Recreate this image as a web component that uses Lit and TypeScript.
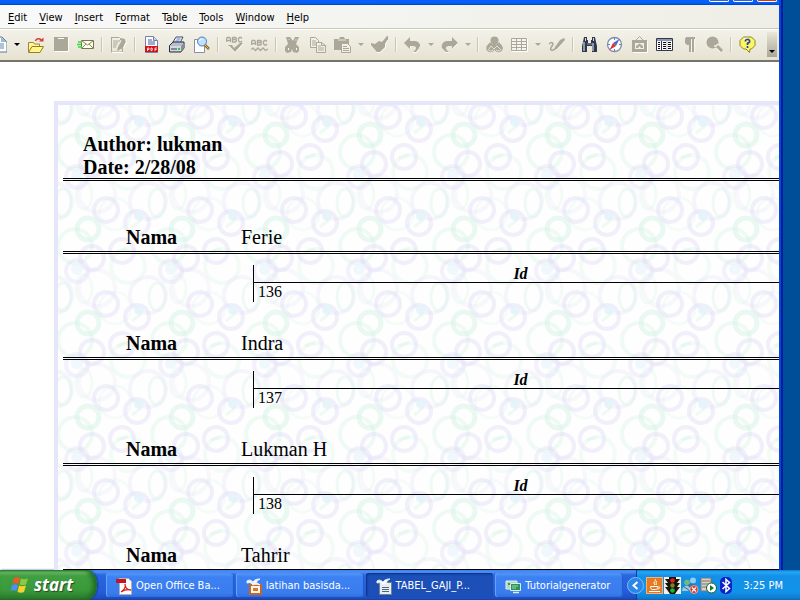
import { LitElement, html, css, svg, nothing, SVGTemplateResult } from "lit";
import { customElement } from "lit/decorators.js";
import { classMap } from "lit/directives/class-map.js";

const G = "#aca899";

const icons: Record<string, SVGTemplateResult> = {
  newDoc: svg`<path d="M3 1h9l5 5v10H3z" fill="#fff" stroke="#5c7894"/><path d="M11 1l6 5h-6z" fill="#9fb8cc"/><path d="M6 8h8M6 10h8M6 12h8" stroke="#5c87a8"/>`,
  open: svg`<path d="M1.5 16V6.500h5l1 1.500h5V11" fill="#fff2a0" stroke="#a08a28"/><path d="M1.500 16.500L5 10.500h11.500L13 16.500z" fill="#fff68c" stroke="#94801e"/><path d="M8.500 5C9 2.500 12 2 14.500 4" fill="none" stroke="#d83a34" stroke-width="1.500"/><path d="M12 5.500h4.500V1.500z" fill="#d83a34"/>`,
  save: svg`<path d="M2 1h14v14H2z" fill="${G}"/><path d="M6 2.500h6" stroke="#fff"/><path d="M16.500 2v13.500H3" fill="none" stroke="#fff"/>`,
  mail: svg`<path d="M4.500 4.500h12v8h-12z" fill="#fffff0" stroke="#77784e"/><path d="M5 5l5.500 4L16 5M5 12l4-4M16 12l-4-4" fill="none" stroke="#8a8a5c"/><path d="M1 6h4M0 8.500h4M1 11h4" stroke="#38d848" stroke-width="1.500"/>`,
  edit: svg`<path d="M1.500 1.500h8M1.500 1v15h11v-4" fill="none" stroke="${G}"/><path d="M3 5h7M3 7h5M3 9h4M3 11h3" stroke="${G}"/><path d="M12 4l4 1-3 7-6 3 1-4z" fill="${G}"/><path d="M10 2l5 1v3l-5-2z" fill="${G}"/><path d="M2 16.500h11M16.500 6l-3 6" fill="none" stroke="#fff"/>`,
  pdf: svg`<path d="M2.500 .5h8l4 4v12h-12z" fill="#fff" stroke="#7780a8"/><path d="M10.500 .5v4h4" fill="#c8d0f0" stroke="#7780a8"/><path d="M5 4h4M5 6h7M5 8h7" stroke="#4858a0"/><path d="M2 10h13v6H2z" fill="#cf1616"/><path d="M4.500 15v-3h1.500v1.500H4.500M8 12v2.500h1l.5-1-.5-1.500zM12 15v-3h2M12 13.500h1.500" fill="none" stroke="#fff" stroke-width=".8"/>`,
  print: svg`<path d="M5 6l3-5h7l-3 6z" fill="#fff" stroke="#424a62"/><path d="M8.500 3h4M7.500 5h4" stroke="#4a72c8"/><path d="M1.500 9.500L5 6h11v6l-3 4H1.500z" fill="#b8bdc9" stroke="#282c3a"/><path d="M2 10h11v5H2z" fill="#d6d9e0"/><path d="M13 10l3-3v5l-3 4z" fill="#858ca4"/><path d="M3 13h6" stroke="#30384a"/><path d="M10 12h2v2h-2z" fill="#28c83c"/>`,
  preview: svg`<path d="M1.500 3.500h10v13h-10z" fill="#fff" stroke="#8791a2"/><circle cx="9" cy="5.500" r="4.500" fill="#bfe1ff" stroke="#4a78c0"/><path d="M6.500 5a3 3 0 0 1 3-2" fill="none" stroke="#fff"/><path d="M12 9l4 4" stroke="#946420" stroke-width="2.500"/><path d="M12 9l3.500 3.500" stroke="#e8b858"/>`,
  spell: svg`<path d="M.5 6V2.500l1-1h2l1 1V6M.5 4.500h4M6.500 1V6h3l1-1-1-1.500h-3 3l1-1-1-1h-3M16 2.500l-1-1h-1.500l-1 1v2l1 1.500h1.500l1-1" fill="none" stroke="${G}" stroke-width="1.300"/><path d="M2 9l4 0 2 3 6-5h3l-8 9z" fill="${G}"/><path d="M3 10l6 6.500 8-8.500" fill="none" stroke="#fff" stroke-width=".7"/>`,
  autoSpell: svg`<path d="M.5 9V5.500l1-1h2l1 1V9M.5 7.500h4M6.500 4V9h3l1-1-1-1.500h-3 3l1-1-1-1h-3M16 5.500l-1-1h-1.500l-1 1v2l1 1.500h1.500l1-1" fill="none" stroke="${G}" stroke-width="1.300"/><path d="M0 13.500l2-1.500 2.500 2.500L7 12l2.500 2.500L12 12l2.500 2.500L17 13" fill="none" stroke="${G}" stroke-width="1.300"/>`,
  cut: svg`<path d="M2 1h4l3 4 2-4h4l-3 7 3 3v4l-2 2-4-1-1-3-1 3-4 1-2-2v-4l3-3z" fill="${G}"/><path d="M4 12h1v2H4zM12 12h1v2h-1z" fill="#fff"/><path d="M5 3v1M12 3v2" stroke="#dedbcf"/>`,
  copy: svg`<path d="M1.500 1.500h5l3 3v7h-8z" fill="#f2f0e6" stroke="${G}"/><path d="M3 5h4M3 7h4M3 9h4" stroke="${G}"/><path d="M7.500 6.500h5l4 3v7h-9z" fill="#f2f0e6" stroke="${G}"/><path d="M12.500 6.500v3h4M9 10h3M9 12h6M9 14h6" fill="none" stroke="${G}"/>`,
  paste: svg`<path d="M0 3h5l1-2h4l1 2h4v11H0z" fill="${G}"/><path d="M4 4h8" stroke="#e9e6da"/><path d="M7.500 7.500h6l3 3v6h-9z" fill="#f2f0e6" stroke="${G}"/><path d="M9 10.500h4M9 12.500h6M9 14.500h6" stroke="${G}"/>`,
  brush: svg`<path d="M16 0h1v4l-3 4 0 3-5 5H6L0 9V7l4 1 4-3 3 1z" fill="${G}"/><path d="M16.500 4L14.500 8.500v3L9 16.500H6" fill="none" stroke="#fff" stroke-width=".8"/>`,
  undo: svg`<path d="M0 7l6-6v4h5c4 0 6 4 5 7l-4 4h-3c4-3 4-5 1-6H6v3z" fill="${G}"/><path d="M6.500 12.500v-2M16.500 10l-4 6.500H9" fill="none" stroke="#fff" stroke-width=".8"/>`,
  redo: svg`<path d="M17 7l-6-6v4H6c-4 0-6 4-5 7l4 4h3c-4-3-4-5-1-6h4v3z" fill="${G}"/><path d="M11.500 12.500l5-5M4 16.500h4" fill="none" stroke="#fff" stroke-width=".8"/>`,
  link: svg`<circle cx="8.500" cy="4.500" r="4" fill="${G}"/><path d="M5 7l-2 3M12 7l2 3M8.500 5v8" stroke="${G}" stroke-width="3"/><circle cx="4.500" cy="12" r="4.300" fill="${G}"/><circle cx="12.500" cy="12" r="4.300" fill="${G}"/><path d="M3 13l2-3 3 3 3-3 3 3M2 13a3 3 0 0 0 5 1M10 14a3 3 0 0 0 5-1" fill="none" stroke="#f0eee4" stroke-width=".8"/>`,
  table: svg`<path d="M.5 2.500h15v12H.5zM.5 5.500h15M.5 8.500h15M.5 11.500h15M5.500 2.500v12M10.500 2.500v12" fill="#f6f4ec" stroke="${G}"/><path d="M16.500 3v12.500H1" fill="none" stroke="#fff"/>`,
  draw: svg`<path d="M16 2c2 1 0 4-2 6l-5 5-3 1 1-3 5-7z" fill="${G}"/><path d="M1 8c3-3 5-1 3 2s-2 5 1 4l2-1" fill="none" stroke="${G}" stroke-width="1.500"/><path d="M16.500 5l-8 9" stroke="#fff" stroke-width=".7"/>`,
  find: svg`<path d="M3 1h3v3h1v3h3V4h1V1h3l1 5 1 4v6h-5v-6H6v6H1v-6l1-4z" fill="#30384c"/><path d="M3 6v9M12 7v8" stroke="#aab4cc" stroke-width="1.500"/><path d="M4.500 2v3M12.500 2v3" stroke="#ccd6e8"/><path d="M6 8h5" stroke="#8c98b8"/>`,
  compass: svg`<circle cx="8.500" cy="8.500" r="7" fill="#fff" stroke="#7e8cad" stroke-width="1.300"/><path d="M8.500 2v2M8.500 13v2M2 8.500h2M13 8.500h2" stroke="#6680c0"/><path d="M13.500 3L10 10 7 7z" fill="#4868d0"/><path d="M3.500 14L7 7l3 3z" fill="#e03030"/>`,
  gallery: svg`<path d="M5 4l3.500-3.500L12 4" fill="none" stroke="${G}"/><path d="M1 4h15v12H1z" fill="${G}"/><path d="M4 7h9v6H4z" fill="#f1efe6"/><path d="M5 12v-2l3.500-2.500L12 10v2H9.500v-1.500h-2V12z" fill="${G}"/><path d="M16.500 5v11.500H2" fill="none" stroke="#fff"/>`,
  data: svg`<path d="M.5 2.500h16v12H.5z" fill="#fff" stroke="#30384e"/><path d="M1 3h15v2H1z" fill="#8d97b0"/><path d="M5.500 5v9" stroke="#30384e"/><path d="M11 5v9" stroke="#b4bac8"/><path d="M2 6.500h2M2 8.500h2M2 10.500h2M2 12.500h2M7 6.500h3M7 8.500h3M7 10.500h3M7 12.500h3M12 6.500h3M12 8.500h3M12 10.500h3M12 12.500h3" stroke="#101010"/>`,
  para: svg`<path d="M5 1h9v2h-1v13h-2V3h-1v13H8V9H6L4 7V3z" fill="${G}"/><path d="M10.500 4v12.500M13.500 3v13.500" stroke="#fff" stroke-width=".6"/>`,
  zoom: svg`<circle cx="6.500" cy="6.500" r="6" fill="${G}"/><path d="M11 10l5 5" stroke="${G}" stroke-width="3"/><path d="M8 10h2l2-2" fill="none" stroke="#efede3" stroke-width="1.500"/><path d="M10.500 12.500l4 4" stroke="#fff"/>`,
  help: svg`<path d="M4.500 1h8L16 4.500v5L12.500 13H11l-.5 3.500L7 13H4.500L1 9.500v-5z" fill="#fdf664" stroke="#8d8626"/><path d="M4.500 3l4-1" stroke="#fff"/><path d="M6.500 5.500V4.500l1-1h2l1 1v1.500L8.500 7.500V9M8.500 10v2" fill="none" stroke="#2a3fa4" stroke-width="1.700"/>`,

  acrobat: svg`<path d="M3.500 .5h9l3 3v13h-12z" fill="#fff" stroke="#b0b0b8"/><path d="M0 1h10v4H0z" fill="#c8141c"/><path d="M5 14c3-2 5-5 4-8 0 4 3 6 6 6-4-1-7 0-10 2z" fill="none" stroke="#d81c1c" stroke-width="1.300"/>`,
  impress: svg`<path d="M3 6h13v11H3z" fill="#c86428"/><path d="M5 8h9v7H5z" fill="#fff4e8"/><path d="M7 10h5v3H7z" fill="#d87830"/><path d="M1 3c3-2 5 0 6 1 2-3 5-3 7-3-2 1-3 2-4 4 2 0 3 1 4 2-3-1-5-1-7 0-1-2-3-3-6-2z" fill="#f2f6fc" stroke="#f2f6fc"/>`,
  report: svg`<path d="M3.500 4.500h12v12h-12z" fill="#e8edf2" stroke="#70808c"/><path d="M6 9.500h7M6 11.500h7M6 13.500h7" stroke="#4c6880"/><path d="M1 3c3-2 5 0 6 1 2-3 5-3 7-3-2 1-3 2-4 4 2 0 3 1 4 2-3-1-5-1-7 0-1-2-3-3-6-2z" fill="#fff" stroke="#e4ecf4"/>`,
  tutorial: svg`<path d="M1 3h11v8H1z" fill="#b4d4c8" stroke="#e3eee9"/><path d="M3 5h7v2H3z" fill="#30965c"/><path d="M5.500 5.500h10v7h-10z" fill="#2c9454" stroke="#dceee4"/><path d="M7 8h6M7 10h4" stroke="#9adcb0"/><path d="M8 14.500h6" stroke="#dfeee5" stroke-width="1.500"/>`,

  java: svg`<path d="M0 0h17v17H0z" fill="#e57a20"/><path d="M.5 .5h16v16H.5z" fill="none" stroke="#f3b27a"/><path d="M9 2c2 2-3 3 0 6M11 4c-2 1 0 2-1 4" fill="none" stroke="#fff"/><path d="M4.500 9.500h7c0 3-1 3-2 3h-3c-1 0-2-1-2-3zM12 10c3-.5 2 2-.5 2M3 14.500h11" fill="none" stroke="#fff"/>`,
  traffic: svg`<path d="M0 0h17v17H0z" fill="#f4f0e8"/><path d="M5 0h7v2h4l-3 4h3l-3 4h3l-3 4-2 3H6l-2-3-3-4h3L1 6h3L1 2h4z" fill="#14140c"/><circle cx="8.500" cy="3.500" r="2.300" fill="#e82018"/><circle cx="8.500" cy="8.500" r="2.200" fill="#8a7c20"/><circle cx="8.500" cy="13.500" r="2.300" fill="#1fb23c"/>`,
  people: svg`<circle cx="11" cy="3.500" r="3" fill="#8fd0ee"/><circle cx="5" cy="5.500" r="2.800" fill="#74bc74"/><path d="M6 8c4-3 9-1 8 4H7z" fill="#3a6f9c"/><path d="M0 14c0-6 8-8 9 0z" fill="#9cc8d8"/><path d="M1 9l7 5" stroke="#31709c"/><circle cx="12" cy="12.500" r="4" fill="#e03424" stroke="#fff" stroke-width=".5"/><path d="M10 10.500l4 4M14 10.500l-4 4" stroke="#fff" stroke-width="1.300"/>`,
  service: svg`<path d="M1 1h10v13H1z" fill="#d4d2c8" stroke="#777"/><path d="M2 4h8M2 7h8M2 10h6" stroke="#77766f"/><circle cx="11.500" cy="11" r="5" fill="#fff" stroke="#285828"/><path d="M10 8v6l4-3z" fill="#128020"/>`,
  bluetooth: svg`<rect x="2" y="0" width="12" height="17" rx="5" fill="#0a22c8"/><path d="M4.500 5l7 6.500-3.500 3v-12l3.500 3-7 6.500" fill="none" stroke="#fff" stroke-width="1.500"/>`,
};

const icon = (name: string) =>
  html`<svg class="icon" viewBox="0 0 17 17" width="17" height="17" aria-hidden="true">${icons[name]}</svg>`;

const iconStyle = css`
  .icon { display: block; flex: none; }
  button { font: inherit; color: inherit; border: 0; padding: 0; margin: 0; background: none; }
`;

@customElement("menu-bar")
class MenuBar extends LitElement {
  static styles = [iconStyle, css`
    :host {
      display: flex; gap: 12px; height: 21px; padding: 2px 8px 0; align-items: center;
      background: linear-gradient(90deg, #f8f9f9, #efeee6);
      border-bottom: 1px solid #cbc8ba;
      font: 11px/16px "DejaVu Sans Condensed", "Noto Sans", sans-serif; color: #000;
    }
    .key { text-decoration: underline; text-underline-offset: 2px; }
  `];
  render() {
    const items = [["", "E", "dit"], ["", "V", "iew"], ["", "I", "nsert"], ["F", "o", "rmat"],
      ["T", "a", "ble"], ["", "T", "ools"], ["", "W", "indow"], ["", "H", "elp"]];
    return items.map(([a, k, b]) => html`<button>${a}<span class="key">${k}</span>${b}</button>`);
  }
}

@customElement("tool-bar")
class ToolBar extends LitElement {
  static styles = [iconStyle, css`
    :host {
      display: flex; height: 30px; overflow: hidden; align-items: stretch;
      background: linear-gradient(#f3f2e9, #e6e3d2);
      border-top: 1px solid #fff; border-bottom: 2px solid #77756b;
    }
    .tools { display: flex; flex: 1; min-width: 0; margin-left: -14px; padding-bottom: 2px; align-items: center; }
    .tool { display: flex; flex: none; width: 25px; height: 25px; align-items: center; justify-content: center; }
    .sep { flex: none; width: 2px; height: 15px; margin: 0 3px; background: #c9c6b8; border-right: 1px solid #f8f7f0; box-sizing: border-box; }
    .drop { flex: none; width: 12px; display: flex; justify-content: center; color: #aca899; }
    .drop.on { color: #000; }
    .more { width: 10px; margin: 2px 2px 3px 0; background: linear-gradient(#e9e6da, #aaa797); display: flex; align-items: flex-end; justify-content: center; padding-bottom: 4px; }
  `];
  private caret = html`<svg width="6" height="3" viewBox="0 0 6 3" aria-hidden="true"><path d="M0 0h6L3 3z" fill="currentColor"/></svg>`;
  render() {
    const seq = ("newDoc v+ open save mail | edit | pdf print preview | spell autoSpell | cut copy paste v brush | " +
      "undo v redo v | link table v draw | find compass gallery data para zoom | help").split(" ");
    return html`
      <div class="tools">${seq.map((s) =>
        s === "|" ? html`<span class="sep"></span>`
        : s[0] === "v" && s.length < 3
          ? html`<button class=${classMap({ drop: true, on: s === "v+" })} aria-label="Options">${this.caret}</button>`
          : html`<button class="tool" aria-label=${s}>${icon(s)}</button>`)}
      </div>
      <button class="more" aria-label="More tools">${this.caret}</button>`;
  }
}

@customElement("report-page")
class ReportPage extends LitElement {
  static styles = css`
    :host {
      display: block; position: relative; margin: 39px 0 0 54px; padding: 28px 0 0 5px;
      border: 4px solid #e6e6fa; border-right: 0; overflow: hidden; min-height: 600px;
      font: 20px/23px "Liberation Serif", serif; color: #000; background: #fff;
    }
    .rings { position: absolute; inset: 0; width: 100%; height: 100%; }
    .content { position: relative; }
    .head { margin: 0 0 -1px; padding-left: 20px; font-weight: bold; }
    .ruled { border-bottom: 3px double #000; background-clip: padding-box; }
    .records { padding-top: 45px; }
    .record { margin-bottom: 30px; }
    .name { display: grid; grid-template-columns: 115px 1fr; margin: 0 0 11px; padding: 0 0 2px 63px; }
    .name dt { font-weight: bold; }
    .name dd { margin: 0; }
    .grid { width: calc(100% - 182px); margin-left: 190px; margin-right: -8px; border-collapse: separate; border-spacing: 0; border-left: 1px solid #000; font-size: 16px; }
    .grid th { font-style: italic; line-height: 17px; padding: 0; border-bottom: 1px solid #000; }
    .grid td { line-height: 18px; padding: 0 0 1px 4px; }
  `;
  render() {
    const rows: [string, number?][] = [["Ferie", 136], ["Indra", 137], ["Lukman H", 138], ["Tahrir"]];
    const v = "#dedaf6", m = "#d2f2e4";
    const rings: [number, number, number, number, string, number, number][] = [
      [14, 68, 17, 17, m, 4, 0.25], [55, 48, 17, 17, m, 4, 0.35],
      [34, 3, 18, 18, v, 4, 0.25], [43, 5, 8, 14, m, 3, 0.35], [77, -4, 18, 18, v, 4, 0.2], [64, -3, 8, 14, m, 3, 0.25],
      [95, 16, 16, 16, m, 3, 0.2],
      [57, 73, 11, 11, v, 4, 0.35], [23, 25, 12, 12, v, 4, 0.42], [86, 12, 12, 12, v, 4, 0.42], [68, 31, 11, 11, m, 5, 0.45],
      [8, 53, 12, 12, v, 4, 0.42], [72, 60, 12, 12, v, 4, 0.42],
    ];
    const shifts = [-94, 0, 94];
    return html`
      <svg class="rings" aria-hidden="true">
        <defs><pattern id="rings" x="56" y="-1" width="94" height="94" patternUnits="userSpaceOnUse">
          <rect width="94" height="94" fill="#fefefe"/>
          ${rings.map(([x, y, rx, ry, c, w, o]) => shifts.map((dx) => shifts.map((dy) =>
            svg`<ellipse cx=${x + dx} cy=${y + dy} rx=${rx} ry=${ry} fill="none" stroke=${c} stroke-width=${w} stroke-opacity=${o}/>`)))}
          <circle cx="25" cy="18" r="5" fill="#e2f4fa" opacity=".8"/>
          <circle cx="57" cy="71" r="6" fill="#e6f3fb" opacity=".6"/>
          <path d="M3 54l10-3M18 29l9-7" stroke="#ccf0e0" stroke-width="3" opacity=".3"/>
        </pattern></defs>
        <rect width="100%" height="100%" fill="url(#rings)"/>
      </svg>
      <div class="content">
        <p class="head">Author: lukman<br>Date: 2/28/08</p>
        <div class="ruled"></div>
        <div class="records">${rows.map(([n, id]) => html`
          <section class="record">
            <dl class="name ruled"><dt>Nama</dt><dd>${n}</dd></dl>
            ${id ? html`<table class="grid"><thead><tr><th scope="col">Id</th></tr></thead><tbody><tr><td>${id}</td></tr></tbody></table>` : nothing}
          </section>`)}
        </div>
      </div>`;
  }
}

@customElement("task-bar")
class TaskBar extends LitElement {
  static styles = [iconStyle, css`
    :host {
      display: flex; flex: none; height: 30px; color: #fff;
      font: 11px/16px "DejaVu Sans Condensed", "Noto Sans", sans-serif;
      background: linear-gradient(#3a80ee 0, #4a92f6 2px, #2a66dd 5px, #245cdb 22px, #1d4fc0 28px, #1941a5);
    }
    .start {
      display: flex; align-items: center; gap: 4px; width: 97px; padding-left: 10px; box-sizing: border-box;
      border-radius: 0 10px 10px 0 / 0 15px 15px 0; flex: none;
      background: linear-gradient(#2f7d2f 0, #6fbd6b 2px, #409f40 6px, #3a9a3a 20px, #2d7f2d 28px, #24682a);
      box-shadow: inset -4px 0 5px #1f6b24, 1px 0 2px #123c9c;
      font: italic bold 17px/24px "Open Sans", sans-serif; text-shadow: 1px 1px 1px #234a20;
    }
    .tasks { display: flex; flex: 1; min-width: 0; gap: 2px; padding: 3px 13px 3px 9px; }
    .task {
      display: flex; align-items: center; flex: 0 1 128px; min-width: 0; gap: 3px; padding: 2px 0 0 10px; box-sizing: border-box;
      border-radius: 3px; background: linear-gradient(#5a98fa, #3c81f3 4px, #3a7cee 20px, #3070dc);
      box-shadow: inset 1px 0 0 #69a2fb, inset -1px 0 1px #225ac8; white-space: nowrap;
    }
    .task.active { background: #1c4fb8; box-shadow: inset 1px 1px 2px #0c2f80; }
    .tray {
      display: flex; align-items: center; flex: none; position: relative; padding: 1px 17px 0 9px; gap: 1px;
      background: linear-gradient(#0c76c8 0, #25a8f4 2px, #1390e8 6px, #1292ea 22px, #0f7cd0 28px, #0c68b4);
      border-left: 1px solid #0b3f94;
    }
    .hide { position: absolute; left: -10px; top: 7px; }
    .hide svg { display: block; }
    time { margin-left: 7px; }
  `];
  render() {
    const tasks = [["acrobat", "Open Office Ba..."], ["impress", "latihan basisda..."], ["report", "TABEL_GAJI_P..."], ["tutorial", "Tutorialgenerator"]];
    return html`
      <button class="start">
        <svg width="20" height="18" viewBox="0 0 20 18" aria-hidden="true">
          <path d="M4 2c2-1 4-1 6 0L8.500 8C6.500 7 4.500 7 2.500 8z" fill="#f0582a"/><path d="M11 2.500c2 1 4 1 7 0L16 8.500c-2 1-4 1-6.500 0z" fill="#86cc3c"/>
          <path d="M2 9c2-1 4-1 6 0L6.500 15c-2-1-4-1-6 0z" fill="#4c90f0"/><path d="M9 9.500c2 1 4 1 7 0L14 16c-2 1-4 1-6.500 0z" fill="#f8d030"/>
        </svg>start
      </button>
      <div class="tasks">${tasks.map(([i, t]) => html`
        <button class=${classMap({ task: true, active: i === "report" })}>${icon(i)}<span>${t}</span></button>`)}
      </div>
      <div class="tray">
        <button class="hide" aria-label="Hide icons"><svg width="17" height="17" viewBox="0 0 17 17">
          <circle cx="8.500" cy="8.500" r="8" fill="#2a86e8" stroke="#7cc0f8"/><path d="M10.500 5l-4 3.500 4 3.500" fill="none" stroke="#fff" stroke-width="2"/></svg></button>
        ${["java", "traffic", "people", "service", "bluetooth"].map(icon)}
        <time>3:25 PM</time>
      </div>`;
  }
}

@customElement("app-root")
class AppRoot extends LitElement {
  static styles = [iconStyle, css`
    :host { display: flex; flex-direction: column; height: 100vh; overflow: hidden; background: #004e98; }
    .window {
      display: flex; flex-direction: column; flex: 1; min-height: 0; margin-right: 17px;
      border-right: 2px solid #001ea0; box-shadow: inset -2px 0 0 #0845d8; padding-right: 2px;
    }
    .title { display: flex; flex: none; justify-content: flex-end; gap: 4px; height: 5px; padding-right: 2px; background: linear-gradient(#0560f8 0, #0560f8 3px, #0040c0); }
    .cap { width: 20px; height: 2px; box-sizing: border-box; background: #2a62e0; border: 1px solid #fff; border-top: 0; border-radius: 0 0 3px 3px; }
    .cap.close { background: #c83c20; }
    .view { flex: 1; min-height: 0; overflow: hidden; background: #fff; }
  `];
  render() {
    return html`
      <main class="window">
        <div class="title">
          <button class="cap" aria-label="Minimize"></button>
          <button class="cap" aria-label="Restore"></button>
          <button class="cap close" aria-label="Close"></button>
        </div>
        <menu-bar></menu-bar>
        <tool-bar></tool-bar>
        <div class="view"><report-page></report-page></div>
      </main>
      <task-bar></task-bar>`;
  }
}
